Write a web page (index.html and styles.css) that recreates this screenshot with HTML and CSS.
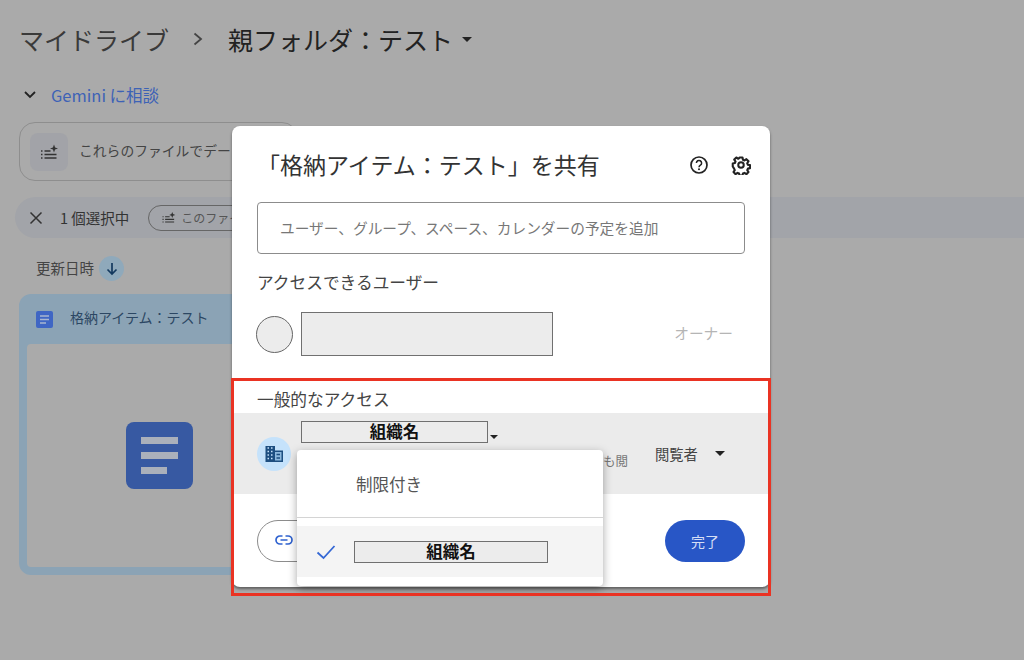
FILE: index.html
```html
<!DOCTYPE html>
<html lang="ja">
<head>
<meta charset="UTF-8">
<meta name="viewport" content="width=device-width, initial-scale=1.0">
<title>共有</title>
<link rel="stylesheet" href="styles.css">
</head>
<body>
  <div class="page">
    <div class="breadcrumb">
      <span>マイドライブ</span>
      <svg class="crumb-sep" width="12" height="16" viewBox="0 0 12 16"><path d="M2.500 2.500l6.500 5.500-6.500 5.500" fill="none" stroke="#444" stroke-width="1.800"/></svg>
      <span class="crumb-current">親フォルダ：テスト</span>
      <span class="caret caret-large"></span>
    </div>

    <div class="gemini">
      <svg width="14" height="10" viewBox="0 0 14 10"><path d="M2 2l5 5 5-5" fill="none" stroke="#222" stroke-width="1.800"/></svg>
      <span class="gemini-label">Gemini に相談</span>
    </div>

    <div class="suggest">
      <div class="suggest-icon">
        <svg width="20" height="20" viewBox="0 0 20 20"><use href="#ai-list"/></svg>
      </div>
      <span class="suggest-text">これらのファイルでデー</span>
    </div>

    <div class="selection">
      <svg class="selection-close" width="14" height="14" viewBox="0 0 14 14"><path d="M1.500 1.500l11 11M12.500 1.500l-11 11" stroke="#333" stroke-width="1.500"/></svg>
      <span class="selection-count">1 個選択中</span>
      <div class="chip">
        <svg width="15" height="15" viewBox="0 0 20 20"><use href="#ai-list"/></svg>
        <span>このファイ</span>
      </div>
    </div>

    <div class="sort">
      <span class="sort-label">更新日時</span>
      <span class="sort-btn">
        <svg width="14" height="14" viewBox="0 0 14 14"><path d="M7 1v11M2.500 7.500L7 12l4.500-4.500" fill="none" stroke="#13395f" stroke-width="1.700"/></svg>
      </span>
    </div>

    <div class="file-card">
      <div class="file-head">
        <svg width="17" height="17" viewBox="0 0 17 17"><rect width="17" height="17" rx="2" fill="#3f66c4"/><path d="M4 5h9M4 8.500h9M4 12h6" stroke="#a9b6d0" stroke-width="1.500"/></svg>
        <span class="file-name">格納アイテム：テスト</span>
      </div>
      <div class="file-preview">
        <div class="doc-big">
          <span class="doc-line"></span>
          <span class="doc-line"></span>
          <span class="doc-line doc-line-short"></span>
        </div>
      </div>
    </div>

    <div class="dialog">
      <div class="dialog-head">
        <h2>「格納アイテム：テスト」を共有</h2>
        <div class="dialog-actions">
          <svg width="20" height="20" viewBox="0 0 20 20"><circle cx="10" cy="10" r="8" fill="none" stroke="#222" stroke-width="1.700"/><path d="M7.400 8a2.600 2.600 0 1 1 4 2.200c-.9.600-1.400 1-1.400 2" fill="none" stroke="#222" stroke-width="1.500"/><circle cx="10" cy="14.300" r="1" fill="#222"/></svg>
          <svg width="20" height="20" viewBox="0 0 24 24"><path d="M10 2h4l.6 3 2 .9 2.600-1.700 2.800 2.800-1.700 2.600.9 2 2.800.6v4l-2.800.6-.9 2 1.700 2.600-2.800 2.800-2.600-1.700-2 .9-.6 2.800h-4l-.6-2.800-2-.9-2.600 1.700-2.800-2.800 1.700-2.600-.9-2L1 14v-4l2.800-.6.9-2L3 4.800 5.800 2l2.600 1.700 1-.7z" transform="translate(1.200 1.200) scale(.9)" fill="none" stroke="#222" stroke-width="2.800" stroke-linejoin="round"/><circle cx="12" cy="12" r="3.300" fill="none" stroke="#222" stroke-width="2.400"/></svg>
        </div>
      </div>

      <div class="people-input">ユーザー、グループ、スペース、カレンダーの予定を追加</div>

      <h3 class="section-title">アクセスできるユーザー</h3>
      <div class="owner-row">
        <span class="avatar"></span>
        <span class="redact redact-owner"></span>
        <span class="owner-role">オーナー</span>
      </div>

      <h3 class="section-title section-general">一般的なアクセス</h3>
      <div class="general-row">
        <span class="org-icon">
          <svg width="18" height="16" viewBox="0 0 18 16"><path d="M.5 0h9.500v4.500h8V16H.5z" fill="#1d4e80"/><path d="M10 6h6.500v8.500H10z" fill="#8db8dd"/><path d="M2.500 2h1.500M6 2h1.500M2.500 5.500h1.500M6 5.500h1.500M2.500 9h1.500M6 9h1.500M2.500 12.500h1.500M6 12.500h1.500" stroke="#c5e2fb" stroke-width="1.500"/><path d="M11.500 8.500h3.500M11.500 12h3.500" stroke="#1d4e80" stroke-width="1.500"/></svg>
        </span>
        <div class="general-main">
          <div class="org-select">
            <span class="redact redact-org">組織名</span>
            <span class="caret caret-small"></span>
          </div>
          <div class="general-note">も閲</div>
        </div>
        <div class="role-select">
          <span>閲覧者</span>
          <span class="caret caret-role"></span>
        </div>
      </div>

      <div class="dialog-foot">
        <button class="btn-link" type="button">
          <svg width="18" height="10" viewBox="0 0 18 10"><path d="M7.500 1H5a4 4 0 0 0 0 8h2.500M10.500 1H13a4 4 0 0 1 0 8h-2.500M5.500 5h7" fill="none" stroke="#2f62d0" stroke-width="1.700"/></svg>
        </button>
        <button class="btn-done" type="button">完了</button>
      </div>

      <div class="menu">
        <div class="menu-item">制限付き</div>
        <div class="menu-divider"></div>
        <div class="menu-item menu-selected">
          <svg class="menu-check" width="20" height="16" viewBox="0 0 20 16"><path d="M1.500 8.500l6 5.500L18.500 2" fill="none" stroke="#3568d4" stroke-width="1.800"/></svg>
          <span class="redact redact-menu">組織名</span>
        </div>
      </div>
    </div>

    <div class="highlight"></div>
  </div>

  <svg class="defs" width="0" height="0">
    <symbol id="ai-list" viewBox="0 0 20 20">
      <path d="M2 9h1.500M2 12.500h1.500M2 16h1.500M5.500 9h6M5.500 12.500h12M5.500 16h12" stroke="#333" stroke-width="1.500"/>
      <path d="M15 2.500l1.100 2.900 2.900 1.100-2.900 1.100-1.100 2.900-1.100-2.900-2.900-1.100 2.900-1.100z" fill="#333"/>
    </symbol>
  </svg>
</body>
</html>
```

FILE: styles.css
```css
* {
  box-sizing: border-box;
}
body {
  margin: 0;
  font-family: "Noto Sans CJK JP", "Noto Sans", sans-serif;
}
h2, h3 {
  margin: 0;
  font-weight: 400;
}
.page {
  position: relative;
  width: 1024px;
  height: 660px;
  overflow: hidden;
  background-color: #aaaaaa;
  color: #333;
}
.defs {
  position: absolute;
}

/* background page */
.breadcrumb {
  display: flex;
  align-items: center;
  height: 40px;
  margin: 19px 0 0 19px;
  font-size: 25px;
  line-height: 40px;
  color: #3a3a3a;
}
.crumb-sep {
  margin: 0 24px 0 23px;
}
.crumb-current {
  color: #222;
}
.caret {
  display: inline-block;
  width: 0;
  height: 0;
  border-style: solid;
  border-color: #222 transparent transparent;
}
.caret-large {
  border-width: 5px 5px 0;
  margin-left: 9px;
}
.gemini {
  display: flex;
  align-items: center;
  height: 24px;
  margin: 24px 0 0 23px;
}
.gemini-label {
  margin-left: 14px;
  font-size: 16.500px;
  color: #3d62b6;
}
.suggest {
  display: flex;
  align-items: center;
  width: 279px;
  height: 59px;
  margin: 15px 0 0 19px;
  padding-left: 10px;
  border: 1px solid #8e8e8e;
  border-radius: 16px;
}
.suggest-icon {
  display: flex;
  align-items: center;
  justify-content: center;
  width: 38px;
  height: 38px;
  flex: none;
  background-color: #a2a3a8;
  border-radius: 8px;
}
.suggest-text {
  margin: 0 0 3px 11px;
  font-size: 13.800px;
  white-space: nowrap;
  color: #444;
}
.selection {
  display: flex;
  align-items: center;
  height: 41px;
  margin: 16px 0 0 15px;
  padding-left: 14px;
  background-color: #a2a4a9;
  border-radius: 21px 0 0 21px;
}
.selection-count {
  margin-left: 17px;
  font-size: 14.500px;
  color: #333;
  white-space: nowrap;
}
.chip {
  display: flex;
  align-items: center;
  gap: 5px;
  width: 120px;
  height: 26px;
  margin-left: 19px;
  padding: 0 12px;
  border: 1px solid #666;
  border-radius: 13px;
  font-size: 12px;
  color: #555;
}
.sort {
  display: flex;
  align-items: center;
  height: 25px;
  margin: 18px 0 0 36px;
  font-size: 14.500px;
  color: #444;
}
.sort-label {
  margin-bottom: 2px;
}
.sort-btn {
  display: flex;
  align-items: center;
  justify-content: center;
  width: 25px;
  height: 25px;
  margin-left: 5px;
  background-color: #8fa9bb;
  border-radius: 50%;
}
.file-card {
  display: flex;
  flex-direction: column;
  width: 300px;
  height: 281px;
  margin: 13px 0 0 19px;
  padding: 0 8px 8px;
  background-color: #8ba3b5;
  border-radius: 12px;
}
.file-head {
  display: flex;
  align-items: center;
  gap: 17px;
  height: 50px;
  padding-left: 9px;
  font-size: 14px;
  color: #2c4763;
}
.file-name {
  margin-bottom: 4px;
}
.file-preview {
  flex: 1;
  padding: 78px 0 0 99px;
  background-color: #aaaaaa;
  border-radius: 4px;
}
.doc-big {
  display: flex;
  flex-direction: column;
  gap: 8px;
  width: 67px;
  height: 67px;
  padding: 15px;
  background-color: #3759a2;
  border-radius: 8px;
}
.doc-line {
  display: block;
  width: 37px;
  height: 7px;
  background-color: #aab0bb;
}
.doc-line-short {
  width: 26px;
}

/* share dialog */
.dialog {
  position: absolute;
  left: 232px;
  top: 126px;
  width: 538px;
  height: 461px;
  background-color: #fff;
  border-radius: 8px;
  box-shadow: 0 2px 3px rgba(0, 0, 0, .45);
}
.dialog-head {
  display: flex;
  align-items: center;
  justify-content: space-between;
  height: 76px;
  padding: 0 19px 0 25px;
}
.dialog-head h2 {
  font-size: 23px;
  color: #333;
}
.dialog-actions {
  display: flex;
  gap: 22px;
  margin-top: 2px;
}
.people-input {
  display: flex;
  align-items: center;
  height: 52px;
  margin: 0 25px;
  padding: 0 0 2px 22px;
  border: 1px solid #8c8c8c;
  border-radius: 4px;
  font-size: 14.700px;
  color: #777;
}
.section-title {
  height: 22px;
  margin: 17px 25px 0;
  font-size: 16.700px;
  line-height: 22px;
  color: #444;
}
.owner-row {
  display: flex;
  align-items: center;
  height: 44px;
  margin: 19px 37px 0 24px;
}
.avatar {
  width: 37px;
  height: 37px;
  background-color: #ececec;
  border: 1px solid #666;
  border-radius: 50%;
}
.redact {
  display: block;
  background-color: #ececec;
  border: 1px solid #707070;
  text-align: center;
  font-weight: 700;
  color: #111;
}
.redact-owner {
  width: 252px;
  height: 44px;
  margin-left: 8px;
}
.owner-role {
  margin: 0 0 3px auto;
  font-size: 14.700px;
  color: #b5b5b5;
}
.section-general {
  margin-top: 32px;
  height: 25px;
}
.general-row {
  display: flex;
  height: 81px;
  padding: 8px 44px 0 25px;
  background-color: #ebebeb;
}
.org-icon {
  display: flex;
  align-items: center;
  justify-content: center;
  width: 34px;
  height: 34px;
  margin-top: 16px;
  flex: none;
  background-color: #c5e2fb;
  border-radius: 50%;
}
.general-main {
  width: 340px;
  margin-left: 10px;
}
.org-select {
  display: flex;
  align-items: flex-end;
}
.redact-org {
  width: 187px;
  height: 22px;
  font-size: 16.500px;
  line-height: 19px;
}
.caret-small {
  border-width: 4px 4px 0;
  margin: 0 0 4px 2px;
}
.general-note {
  width: 327px;
  height: 20px;
  margin-top: 8px;
  text-align: right;
  font-size: 12.500px;
  line-height: 20px;
  color: #777;
}
.role-select {
  display: flex;
  align-items: center;
  height: 24px;
  margin: 20px 0 0 14px;
  font-size: 14.300px;
  color: #444;
}
.caret-role {
  border-width: 5px 5px 0;
  margin-left: 17px;
}
.dialog-foot {
  display: flex;
  justify-content: space-between;
  align-items: center;
  height: 42px;
  margin: 26px 25px 0;
}
.btn-link {
  display: flex;
  align-items: center;
  width: 180px;
  height: 42px;
  padding: 0 0 2px 17px;
  background-color: #fff;
  border: 1px solid #8c8c8c;
  border-radius: 21px;
}
.btn-done {
  width: 80px;
  height: 42px;
  padding: 0;
  background-color: #2856c6;
  border: none;
  border-radius: 21px;
  font: inherit;
  font-size: 14px;
  color: #d5def5;
}

/* dropdown over the dialog */
.menu {
  position: absolute;
  left: 65px;
  top: 324px;
  width: 306px;
  height: 136px;
  padding-top: 8px;
  background-color: #fff;
  border-radius: 4px;
  box-shadow: 0 3px 10px rgba(0, 0, 0, .35);
}
.menu-item {
  display: flex;
  align-items: center;
  height: 51px;
  padding-left: 59px;
  font-size: 16.500px;
  color: #555;
}
.menu-divider {
  height: 1px;
  margin: 8px 0;
  background-color: #d4d4d4;
}
.menu-selected {
  padding-left: 19px;
  background-color: #f4f4f4;
}
.redact-menu {
  width: 194px;
  height: 22px;
  margin-left: 18px;
  font-size: 16.500px;
  line-height: 19px;
}

/* annotation frame */
.highlight {
  position: absolute;
  left: 231px;
  top: 378px;
  width: 540px;
  height: 218px;
  border: 3px solid #ea3323;
}
```
